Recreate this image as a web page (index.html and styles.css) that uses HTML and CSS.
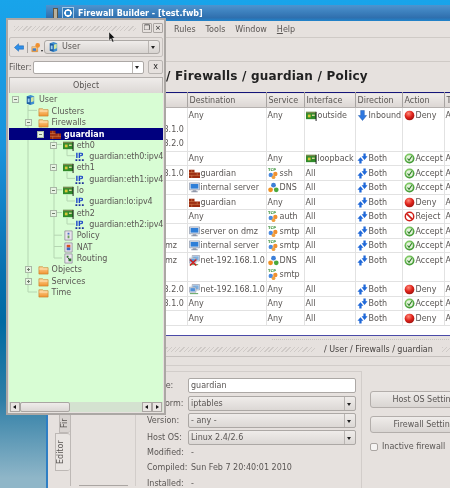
FILE: index.html
```html
<!DOCTYPE html>
<html lang="en">

    <head>
        <meta charset="UTF-8">
        <meta name="viewport" content="width=device-width, initial-scale=1.0">
        <title>Firewall Builder - [test.fwb]</title>
        <link rel="stylesheet" href="styles.css">
    </head>

    <body>

        <svg class="defs" aria-hidden="true">
            <defs>
                <radialGradient id="redball" cx="0.4" cy="0.3" r="0.8">
                    <stop offset="0" stop-color="#ff8a7a"/>
                    <stop offset="0.5" stop-color="#e0241c"/>
                    <stop offset="1" stop-color="#8e0f0c"/>
                </radialGradient>
                <radialGradient id="greenball" cx="0.4" cy="0.3" r="0.8">
                    <stop offset="0" stop-color="#9de07c"/>
                    <stop offset="1" stop-color="#2c8a22"/>
                </radialGradient>
                <linearGradient id="folderfill" x1="0" y1="0" x2="0" y2="1">
                    <stop offset="0" stop-color="#ffd79a"/>
                    <stop offset="1" stop-color="#f0922e"/>
                </linearGradient>
                <symbol id="i-folder" viewBox="0 0 12 12">
                    <path d="M1 3h4l1 1h5v7H1z" fill="url(#folderfill)" stroke="#c8822e" stroke-width="0.7"/>
                    <path d="M1.5 5.5h9" stroke="#fff0d0" stroke-width="0.8"/>
                </symbol>
                <symbol id="i-user" viewBox="0 0 12 12">
                    <path d="M2 2.5 6 1l4 1.5v8L6 12l-4-1.500z" fill="#3f8fd0"/>
                    <path d="M6 3.500v8L2 10.500v-8z" fill="#1d5ca0"/>
                    <path d="M6.500 4l3-1v5l-3 1z" fill="#d5e8a0"/>
                    <path d="M3 5h2v4H3z" fill="#9fd0ee"/>
                </symbol>
                <symbol id="i-fw" viewBox="0 0 12 12">
                    <path d="M0 2h6v3h6v6H0z" fill="#9c2c10"/>
                    <path d="M0 5h6M6 8h6M3 2v3M3 8v3M9 5v3M0 8h6" stroke="#d88a58" stroke-width="0.6"/>
                </symbol>
                <symbol id="i-nic" viewBox="0 0 12 12">
                    <path d="M0 2h11v8H0z" fill="#2f8a2a"/>
                    <path d="M0 2h11v1.500H0z" fill="#7a8a50"/>
                    <path d="M2 5h3v3H2z" fill="#d8c838"/>
                    <path d="M6.500 5h3v1.500h-3z" fill="#e0d8a0"/>
                    <path d="M11 2v10" stroke="#111" stroke-width="1"/>
                </symbol>
                <symbol id="i-ip" viewBox="0 0 12 12">
                    <text x="0.500" y="7.500" class="ip-glyph">IP</text>
                    <path d="M0.500 9h2v2h-2zM4 9h2v2H4zM7.500 9h2v2h-2z" fill="#1c2f9c"/>
                </symbol>
                <symbol id="i-policy" viewBox="0 0 12 12">
                    <path d="M2 1h8v10H2z" fill="#e8e4ec" stroke="#8c8498" stroke-width="0.8"/>
                    <path d="M5 3h2v2H5z" fill="#4a6ec0"/>
                    <path d="M5 6h2v3H5z" fill="#6aa05a"/>
                </symbol>
                <symbol id="i-nat" viewBox="0 0 12 12">
                    <path d="M2 1h8v10H2z" fill="#e8e4ec" stroke="#8c8498" stroke-width="0.8"/>
                    <path d="M4 3h4v3H4z" fill="#d85020"/>
                    <path d="M4 6h4v3H4z" fill="#3c68c0"/>
                </symbol>
                <symbol id="i-routing" viewBox="0 0 12 12">
                    <path d="M2 1h8v10H2z" fill="#e8e4ec" stroke="#8c8498" stroke-width="0.8"/>
                    <path d="M4 3h2v2H4z" fill="#2c7a2c"/>
                    <path d="M6 6h3v3H6z" fill="#2c7a2c"/>
                    <path d="M5 5l2 2" stroke="#222" stroke-width="0.8"/>
                </symbol>
                <symbol id="i-back" viewBox="0 0 12 12">
                    <path d="M0.500 6 5.500 1.500V4H11.500V8H5.500v2.500z" fill="#2f8fe8" stroke="#1560b0" stroke-width="0.6"/>
                </symbol>
                <symbol id="i-tree" viewBox="0 0 12 12">
                    <path d="M1 5h7v6H1z" fill="url(#folderfill)" stroke="#c8822e" stroke-width="0.6"/>
                    <circle cx="8" cy="3.500" r="2.800" fill="#f09030"/>
                    <path d="M2 7h4v3H2z" fill="#3f80d0"/>
                </symbol>
                <symbol id="i-host" viewBox="0 0 12 12">
                    <path d="M0.500 1h11v7.500H0.500z" fill="#dfe6f2" stroke="#7f8aa0" stroke-width="0.7"/>
                    <path d="M1.800 2.200h8.400v5H1.800z" fill="#2f7fd8"/>
                    <path d="M4 9h4v1H4zM2.500 10.200h7v1h-7z" fill="#8e96a8"/>
                </symbol>
                <symbol id="i-net" viewBox="0 0 12 12">
                    <path d="M3.500 0.500h8v6h-8z" fill="#dfe6f2" stroke="#7f8aa0" stroke-width="0.6"/>
                    <path d="M4.500 1.500h6v4h-6z" fill="#7fb0e0"/>
                    <path d="M0.500 3.500h7v5.500h-7z" fill="#dfe6f2" stroke="#7f8aa0" stroke-width="0.6"/>
                    <path d="M1.500 4.500h5v3.500h-5z" fill="#4f90d8"/>
                    <path d="M1 10.500h9" stroke="#4f9a4f" stroke-width="1"/>
                </symbol>
                <symbol id="i-netx" viewBox="0 0 12 12">
                    <use href="#i-net"/>
                    <path d="M1 5l7 6.500M8 5l-7 6.500" stroke="#d0201c" stroke-width="1.600"/>
                </symbol>
                <symbol id="i-tcp" viewBox="0 0 12 12">
                    <text x="0" y="3.800" class="tcp-glyph">TCP</text>
                    <circle cx="3" cy="7.500" r="2.400" fill="#4a8ae0"/>
                    <circle cx="8" cy="6.500" r="2.400" fill="#f09030"/>
                    <circle cx="6" cy="10" r="2" fill="#f0a040"/>
                </symbol>
                <symbol id="i-dns" viewBox="0 0 12 12">
                    <circle cx="6" cy="3.500" r="2.600" fill="#3d7fd8"/>
                    <circle cx="2.800" cy="8.500" r="2.600" fill="#f09020"/>
                    <circle cx="9" cy="8.500" r="2.600" fill="#4aa83c"/>
                </symbol>
                <symbol id="i-deny" viewBox="0 0 12 12">
                    <circle cx="6" cy="6" r="5.300" fill="url(#redball)"/>
                </symbol>
                <symbol id="i-accept" viewBox="0 0 12 12">
                    <circle cx="6" cy="6" r="5.400" fill="url(#greenball)"/>
                    <circle cx="6" cy="6" r="3.600" fill="#e4f2dc"/>
                    <path d="M3.800 6l1.700 2 3-4.500" fill="none" stroke="#2a7a22" stroke-width="1.200"/>
                </symbol>
                <symbol id="i-reject" viewBox="0 0 12 12">
                    <circle cx="6" cy="6" r="4.600" fill="#fff" stroke="#cf1f18" stroke-width="1.600"/>
                    <path d="M2.800 2.800l6.400 6.400" stroke="#cf1f18" stroke-width="1.800"/>
                </symbol>
                <symbol id="i-inbound" viewBox="0 0 12 12">
                    <path d="M4 0.500h4V6h2.500L6 11.500 1.500 6H4z" fill="#2f78e0" stroke="#1a55a8" stroke-width="0.5"/>
                </symbol>
                <symbol id="i-both" viewBox="0 0 12 12">
                    <path d="M7 0.500h2.500v3H11.500L8.200 7.500 5 3.500H7z" fill="#1f68d8"/>
                    <path d="M2.500 11.500H5v-3H7L3.800 4.500 0.500 8.500H2.500z" fill="#1f68d8"/>
                </symbol>
            </defs>
        </svg>

        <div class="desktop">

            <div class="main-window">
                <div class="titlebar">
                    <span class="tb-tower"></span>
                    <span class="tb-logo"></span>
                    <span class="tb-title">Firewall Builder - [test.fwb]</span>
                </div>
                <div class="menubar">
                    <span>Rules</span>
                    <span>Tools</span>
                    <span>Window</span>
                    <span><u>H</u>elp</span>
                </div>
                <div class="toolbar"></div>
                <div class="crumb">/ Firewalls / guardian / Policy</div>

                <table class="rules">
                    <colgroup>
                        <col class="c-num"><col class="c-src"><col class="c-dst"><col class="c-srv">
                        <col class="c-if"><col class="c-dir"><col class="c-act"><col class="c-time">
                    </colgroup>
                    <thead>
                        <tr><th></th><th></th><th>Destination</th><th>Service</th><th>Interface</th><th>Direction</th><th>Action</th><th>Time</th></tr>
                    </thead>
                    <tbody>
                        <tr class="r3">
                            <td></td>
                            <td class="src"><div>&nbsp;</div><div>net-192.168.1.0</div><div>net-192.168.2.0</div></td>
                            <td>Any</td>
                            <td>Any</td>
                            <td><svg class="ico"><use href="#i-nic"/></svg>outside</td>
                            <td><svg class="ico"><use href="#i-inbound"/></svg>Inbound</td>
                            <td><svg class="ico"><use href="#i-deny"/></svg>Deny</td>
                            <td>Any</td>
                        </tr>
                        <tr class="s">
                            <td></td><td class="src"></td>
                            <td>Any</td>
                            <td>Any</td>
                            <td><svg class="ico"><use href="#i-nic"/></svg>loopback</td>
                            <td><svg class="ico"><use href="#i-both"/></svg>Both</td>
                            <td><svg class="ico"><use href="#i-accept"/></svg>Accept</td>
                            <td>Any</td>
                        </tr>
                        <tr>
                            <td></td><td class="src">net-192.168.1.0</td>
                            <td><svg class="ico"><use href="#i-fw"/></svg>guardian</td>
                            <td><svg class="ico"><use href="#i-tcp"/></svg>ssh</td>
                            <td>All</td>
                            <td><svg class="ico"><use href="#i-both"/></svg>Both</td>
                            <td><svg class="ico"><use href="#i-accept"/></svg>Accept</td>
                            <td>Any</td>
                        </tr>
                        <tr class="s">
                            <td></td><td class="src"></td>
                            <td><svg class="ico"><use href="#i-host"/></svg>internal server</td>
                            <td><svg class="ico"><use href="#i-dns"/></svg>DNS</td>
                            <td>All</td>
                            <td><svg class="ico"><use href="#i-both"/></svg>Both</td>
                            <td><svg class="ico"><use href="#i-accept"/></svg>Accept</td>
                            <td>Any</td>
                        </tr>
                        <tr>
                            <td></td><td class="src"></td>
                            <td><svg class="ico"><use href="#i-fw"/></svg>guardian</td>
                            <td>Any</td>
                            <td>All</td>
                            <td><svg class="ico"><use href="#i-both"/></svg>Both</td>
                            <td><svg class="ico"><use href="#i-deny"/></svg>Deny</td>
                            <td>Any</td>
                        </tr>
                        <tr class="s">
                            <td></td><td class="src"></td>
                            <td>Any</td>
                            <td><svg class="ico"><use href="#i-tcp"/></svg>auth</td>
                            <td>All</td>
                            <td><svg class="ico"><use href="#i-both"/></svg>Both</td>
                            <td><svg class="ico"><use href="#i-reject"/></svg>Reject</td>
                            <td>Any</td>
                        </tr>
                        <tr>
                            <td></td><td class="src"></td>
                            <td><svg class="ico"><use href="#i-host"/></svg>server on dmz</td>
                            <td><svg class="ico"><use href="#i-tcp"/></svg>smtp</td>
                            <td>All</td>
                            <td><svg class="ico"><use href="#i-both"/></svg>Both</td>
                            <td><svg class="ico"><use href="#i-accept"/></svg>Accept</td>
                            <td>Any</td>
                        </tr>
                        <tr class="s">
                            <td></td><td class="src">server on dmz</td>
                            <td><svg class="ico"><use href="#i-host"/></svg>internal server</td>
                            <td><svg class="ico"><use href="#i-tcp"/></svg>smtp</td>
                            <td>All</td>
                            <td><svg class="ico"><use href="#i-both"/></svg>Both</td>
                            <td><svg class="ico"><use href="#i-accept"/></svg>Accept</td>
                            <td>Any</td>
                        </tr>
                        <tr class="r2">
                            <td></td><td class="src">server on dmz</td>
                            <td><svg class="ico"><use href="#i-netx"/></svg>net-192.168.1.0</td>
                            <td><div><svg class="ico"><use href="#i-dns"/></svg>DNS</div><div><svg class="ico"><use href="#i-tcp"/></svg>smtp</div></td>
                            <td>All</td>
                            <td><svg class="ico"><use href="#i-both"/></svg>Both</td>
                            <td><svg class="ico"><use href="#i-accept"/></svg>Accept</td>
                            <td>Any</td>
                        </tr>
                        <tr>
                            <td></td><td class="src">net-192.168.2.0</td>
                            <td><svg class="ico"><use href="#i-net"/></svg>net-192.168.1.0</td>
                            <td>Any</td>
                            <td>All</td>
                            <td><svg class="ico"><use href="#i-both"/></svg>Both</td>
                            <td><svg class="ico"><use href="#i-deny"/></svg>Deny</td>
                            <td>Any</td>
                        </tr>
                        <tr class="s">
                            <td></td><td class="src">net-192.168.1.0</td>
                            <td>Any</td>
                            <td>Any</td>
                            <td>All</td>
                            <td><svg class="ico"><use href="#i-both"/></svg>Both</td>
                            <td><svg class="ico"><use href="#i-accept"/></svg>Accept</td>
                            <td>Any</td>
                        </tr>
                        <tr>
                            <td></td><td class="src"></td>
                            <td>Any</td>
                            <td>Any</td>
                            <td>All</td>
                            <td><svg class="ico"><use href="#i-both"/></svg>Both</td>
                            <td><svg class="ico"><use href="#i-deny"/></svg>Deny</td>
                            <td>Any</td>
                        </tr>
                    </tbody>
                </table>
                <div class="table-rest"></div>

                <div class="splitter"></div>
                <div class="path-bar">
                    <span class="hatch"></span>
                    <span class="path-text">/ User / Firewalls / guardian</span>
                    <span class="hatch"></span>
                </div>
                <div class="spacer-bar"></div>

                <div class="editor">
                    <div class="tabs">
                        <div class="tab tab-fir">Fir</div>
                        <div class="tab tab-editor">Editor</div>
                    </div>
                    <div class="side-pane"><span class="side-btn"></span></div>
                    <div class="group">
                        <span class="lbl">Name:</span>
                        <div class="field field-text">guardian</div>
                        <span class="lbl">Platform:</span>
                        <div class="field combo">iptables<span class="combo-arrow"></span></div>
                        <span class="lbl">Version:</span>
                        <div class="field combo">- any -<span class="combo-arrow"></span></div>
                        <span class="lbl">Host OS:</span>
                        <div class="field combo">Linux 2.4/2.6<span class="combo-arrow"></span></div>
                        <span class="lbl">Modified:</span>
                        <span class="val">-</span>
                        <span class="lbl">Compiled:</span>
                        <span class="val">Sun Feb 7 20:40:01 2010</span>
                        <span class="lbl">Installed:</span>
                        <span class="val">-</span>
                    </div>
                    <div class="side-actions">
                        <div class="btn">Host OS Settings...</div>
                        <div class="btn">Firewall Settings...</div>
                        <label class="check"><span class="check-box"></span>Inactive firewall</label>
                    </div>
                </div>
            </div>

            <div class="panel">
                <div class="panel-title">
                    <span class="hatch"></span>
                    <span class="win-btn">&#10064;</span>
                    <span class="win-btn">&#215;</span>
                </div>
                <div class="panel-tools">
                    <svg class="tool-ico"><use href="#i-back"/></svg>
                    <span class="tool-sep"></span>
                    <svg class="tool-ico"><use href="#i-tree"/></svg>
                    <span class="tool-drop"></span>
                    <div class="lib-combo">
                        <svg class="ico"><use href="#i-user"/></svg>User
                        <span class="combo-arrow"></span>
                    </div>
                </div>
                <div class="filter-row">
                    <span class="filter-label">Filter:</span>
                    <div class="filter-input"><span class="combo-arrow"></span></div>
                    <div class="filter-x">x</div>
                </div>
                <div class="tree-head">Object</div>
                <div class="tree">
                    <svg class="tree-lines" width="154" height="309">
                        <path d="M19 12V199M19 17.350H28M19 199H28M32 28V40M45 45V165M45 51.400H53M45 96.800H53M45 119.500H53M45 142.200H53M45 153.500H53M45 165H53M58 56V62.700H66M58 79V85.400H66M58 102V108H66M58 125V131H66" fill="none" stroke="#b5d6b2" stroke-width="1"/>
                    </svg>
                    <div class="node lvl0"><span class="exp open"></span><svg class="ico"><use href="#i-user"/></svg>User</div>
                    <div class="node lvl1"><span class="exp none"></span><svg class="ico"><use href="#i-folder"/></svg>Clusters</div>
                    <div class="node lvl1"><span class="exp open"></span><svg class="ico"><use href="#i-folder"/></svg>Firewalls</div>
                    <div class="node lvl2 selected"><span class="exp open"></span><svg class="ico"><use href="#i-fw"/></svg>guardian</div>
                    <div class="node lvl3"><span class="exp open"></span><svg class="ico"><use href="#i-nic"/></svg>eth0</div>
                    <div class="node lvl4"><span class="exp none"></span><svg class="ico"><use href="#i-ip"/></svg>guardian:eth0:ipv4</div>
                    <div class="node lvl3"><span class="exp open"></span><svg class="ico"><use href="#i-nic"/></svg>eth1</div>
                    <div class="node lvl4"><span class="exp none"></span><svg class="ico"><use href="#i-ip"/></svg>guardian:eth1:ipv4</div>
                    <div class="node lvl3"><span class="exp open"></span><svg class="ico"><use href="#i-nic"/></svg>lo</div>
                    <div class="node lvl4"><span class="exp none"></span><svg class="ico"><use href="#i-ip"/></svg>guardian:lo:ipv4</div>
                    <div class="node lvl3"><span class="exp open"></span><svg class="ico"><use href="#i-nic"/></svg>eth2</div>
                    <div class="node lvl4"><span class="exp none"></span><svg class="ico"><use href="#i-ip"/></svg>guardian:eth2:ipv4</div>
                    <div class="node lvl3"><span class="exp none"></span><svg class="ico"><use href="#i-policy"/></svg>Policy</div>
                    <div class="node lvl3"><span class="exp none"></span><svg class="ico"><use href="#i-nat"/></svg>NAT</div>
                    <div class="node lvl3"><span class="exp none"></span><svg class="ico"><use href="#i-routing"/></svg>Routing</div>
                    <div class="node lvl1"><span class="exp closed"></span><svg class="ico"><use href="#i-folder"/></svg>Objects</div>
                    <div class="node lvl1"><span class="exp closed"></span><svg class="ico"><use href="#i-folder"/></svg>Services</div>
                    <div class="node lvl1"><span class="exp none"></span><svg class="ico"><use href="#i-folder"/></svg>Time</div>
                </div>
                <div class="hscroll">
                    <span class="sb-btn sb-left"></span>
                    <span class="sb-thumb"></span>
                    <span class="sb-track"></span>
                    <span class="sb-btn sb-left"></span>
                    <span class="sb-btn sb-right"></span>
                </div>
            </div>

            <svg class="cursor" width="8" height="11" viewBox="0 0 8 11">
                <path d="M1 0v8.500l2-2 1.300 3.500 1.500-.6L4.500 6H7z" fill="#111" stroke="#eee" stroke-width="0.4"/>
            </svg>

        </div>

    </body>

</html>
```

FILE: styles.css
```css
html,
body {
    margin: 0;
    padding: 0;
    overflow: hidden;
}

body {
    font-family: "DejaVu Sans", sans-serif;
    font-size: 8px;
    color: #5a5654;
    width: 450px;
    height: 488px;
}

.defs {
    display: block;
    width: 0;
    height: 0;
}

.ip-glyph {
    font-family: "DejaVu Sans", sans-serif;
    font-size: 8px;
    font-weight: bold;
    fill: #1c45c8;
}

.tcp-glyph {
    font-family: "DejaVu Sans", sans-serif;
    font-size: 4px;
    font-weight: bold;
    fill: #2c8a2c;
}

.desktop {
    position: relative;
    width: 450px;
    height: 488px;
    overflow: hidden;
    filter: blur(0.35px);
    background: linear-gradient(180deg, #18a4ea 0%, #1a93dc 30%, #0a70b0 55%, #006aa2 66%, #2f7ea6 82%, #8fb6c8 98%);
}

.cursor {
    position: absolute;
    left: 108px;
    top: 32px;
}

.ico {
    width: 11px;
    height: 11px;
    margin-right: 1px;
    vertical-align: -3px;
    flex: none;
}

/* main window */
.main-window {
    position: absolute;
    left: 46px;
    top: 5px;
    width: 520px;
    height: 490px;
    display: flex;
    flex-direction: column;
    background-color: #e6e1de;
    border-left: 2px solid #2f7fc4;
    box-sizing: border-box;
}

.titlebar {
    height: 16px;
    display: flex;
    align-items: center;
    flex: none;
    margin-left: -2px;
    background: linear-gradient(180deg, #4d94cf, #2f6fae 80%, #1f84cc);
    color: #fff;
    font-weight: bold;
}

.tb-tower {
    width: 5px;
    height: 11px;
    margin-left: 7px;
    background-color: #b8b09c;
    border: 1px solid #5a5648;
    box-sizing: border-box;
}

.tb-logo {
    width: 12px;
    height: 12px;
    margin-left: 4px;
    background: radial-gradient(circle, #2f7fc4 0 2px, #fff 2.5px 3.5px, #2a78ba 4px);
    border: 1px solid #a8cbe6;
    box-sizing: border-box;
}

.tb-title {
    margin-left: 4px;
    white-space: nowrap;
}

.menubar {
    height: 17px;
    flex: none;
    display: flex;
    align-items: center;
    padding-left: 126px;
    gap: 10px;
    border-bottom: 1px solid #cfcac6;
    box-sizing: border-box;
}

.toolbar {
    height: 24px;
    flex: none;
    border-bottom: 1px solid #cfcac6;
    box-sizing: border-box;
}

.crumb {
    height: 30px;
    flex: none;
    line-height: 29px;
    padding-left: 118px;
    font-size: 12px;
    font-weight: bold;
    color: #222;
    letter-spacing: 0.2px;
    white-space: nowrap;
    box-sizing: border-box;
}

/* rules table */
.rules {
    table-layout: fixed;
    width: 520px;
    border-collapse: collapse;
    background-color: #fff;
    border-top: 1px solid #14147a;
    flex: none;
}

.c-num { width: 39px; }
.c-src { width: 100px; }
.c-dst { width: 79px; }
.c-srv { width: 38px; }
.c-if { width: 51px; }
.c-dir { width: 47px; }
.c-act { width: 42px; }
.c-time { width: 124px; }

.rules th {
    height: 14px;
    padding: 0 0 0 2px;
    font-weight: normal;
    text-align: left;
    white-space: nowrap;
    overflow: hidden;
    background: linear-gradient(180deg, #f0edeb, #dbd6d3);
    border-right: 1px solid #a8a4a2;
    border-bottom: 1px solid #b5b1af;
}

.rules td {
    height: 13px;
    padding: 1px 0 0 1px;
    line-height: 13px;
    white-space: nowrap;
    overflow: hidden;
    vertical-align: top;
    border-right: 1px solid #e2e2e2;
    border-bottom: 1px solid #e2e2e2;
}

.rules td.src {
    padding-left: 32px;
}

.rules .s td {
    height: 12px;
    line-height: 12px;
}

.rules .r3 td {
    height: 42px;
    line-height: 14px;
}

.rules .r2 td {
    height: 27px;
    line-height: 13.5px;
}

.table-rest {
    height: 10px;
    flex: none;
    background-color: #fff;
    border-bottom: 1px solid #4a4aa8;
    box-sizing: border-box;
}

.splitter {
    height: 6px;
    flex: none;
    margin-left: 224px;
    background: repeating-linear-gradient(90deg, #c9c5c2 0 1px, transparent 1px 2px) center / 100% 1px no-repeat;
}

.path-bar {
    height: 15px;
    flex: none;
    display: flex;
    align-items: center;
    gap: 9px;
    border-bottom: 1px solid #c6c1be;
    box-sizing: border-box;
}

.path-bar .hatch:first-child {
    width: 267px;
    flex: none;
}

.path-text {
    white-space: nowrap;
    color: #45413f;
}

.hatch {
    flex: 1;
    height: 5px;
    background: repeating-linear-gradient(135deg, #cfcac7 0 1px, transparent 1px 3px);
}

.spacer-bar {
    height: 9px;
    flex: none;
    border-bottom: 1px solid #d2cdca;
    box-sizing: border-box;
}

.editor {
    flex: 1;
    display: flex;
    min-height: 0;
}

.tabs {
    width: 22px;
    flex: none;
    padding-top: 47px;
    display: flex;
    flex-direction: column;
    align-items: flex-end;
    box-sizing: border-box;
}

.tab {
    writing-mode: vertical-rl;
    transform: rotate(180deg);
    text-align: center;
    border: 1px solid #bdb8b5;
    border-left: none;
    box-sizing: border-box;
}

.tab-fir {
    width: 11px;
    height: 20px;
    overflow: hidden;
    background-color: #d8d3d0;
    border-radius: 3px 0 0 3px;
}

.tab-editor {
    width: 15px;
    height: 38px;
    background-color: #e9e5e2;
    border-radius: 3px 0 0 3px;
}

.side-pane {
    width: 64px;
    flex: none;
    display: flex;
    justify-content: center;
    align-items: flex-end;
    border-left: 1px solid #bdb8b5;
    border-right: 1px solid #d2cdca;
    box-sizing: content-box;
    height: 120px;
}

.side-btn {
    width: 49px;
    height: 1px;
    background-color: #aaa5a2;
}

.group {
    width: 226px;
    flex: none;
    height: 130px;
    margin-top: 5px;
    padding: 4px 5px 0 11px;
    box-sizing: border-box;
    display: grid;
    grid-template-columns: 41px 1fr;
    grid-template-rows: 19px 17px 17px 17px 13px 16px 16px;
    align-items: center;
    border-top: 1px solid #d2cdca;
    border-right: 1px solid #d2cdca;
}

.lbl,
.val {
    white-space: nowrap;
}

.val {
    padding-left: 3px;
    line-height: 13px;
}

.field {
    height: 15px;
    line-height: 13px;
    padding-left: 2px;
    border: 1px solid #aca8a5;
    border-radius: 2px;
    box-sizing: border-box;
    position: relative;
}

.field-text {
    background-color: #fff;
}

.combo {
    background: linear-gradient(180deg, #efecea, #dcd8d5);
}

.combo-arrow {
    position: absolute;
    right: 0;
    top: 0;
    bottom: 0;
    width: 10px;
    border-left: 1px solid #b9b5b2;
}

.combo-arrow::after {
    content: "";
    position: absolute;
    left: 2px;
    top: 50%;
    margin-top: -1px;
    border: 2px solid transparent;
    border-top: 3px solid #222;
}

.side-actions {
    margin-left: 8px;
    padding-top: 25px;
    display: flex;
    flex-direction: column;
    gap: 8px;
    width: 120px;
    flex: none;
}

.btn {
    height: 17px;
    line-height: 15px;
    text-align: center;
    border: 1px solid #b3aeab;
    border-radius: 3px;
    background: linear-gradient(180deg, #efecea, #d9d5d2);
    white-space: nowrap;
    box-sizing: border-box;
}

.check {
    display: flex;
    align-items: center;
    gap: 4px;
    margin-top: 1px;
}

.check-box {
    width: 6px;
    height: 6px;
    background-color: #f6f4f3;
    border: 1px solid #aaa5a2;
    border-radius: 2px;
}

/* floating object tree */
.panel {
    position: absolute;
    left: 6px;
    top: 18px;
    width: 160px;
    height: 397px;
    padding: 1px;
    display: flex;
    flex-direction: column;
    background-color: #e6e1de;
    border: 2px solid #aba7a4;
    box-sizing: border-box;
}

.panel-title {
    height: 14px;
    flex: none;
    display: flex;
    align-items: center;
    gap: 1px;
    padding: 0 0 0 5px;
}

.panel-title .hatch {
    margin-right: 5px;
}

.win-btn {
    width: 8px;
    height: 8px;
    line-height: 8px;
    font-size: 7px;
    text-align: center;
    color: #222;
    border: 1px solid #aaa5a2;
    border-radius: 1px;
}

.panel-tools {
    height: 20px;
    flex: none;
    margin: 2px 0 0;
    display: flex;
    align-items: center;
    padding: 0 2px 0 4px;
    border: 1px solid #c6c1be;
    border-radius: 2px;
    box-sizing: border-box;
}

.tool-ico {
    width: 10px;
    height: 11px;
    flex: none;
}

.tool-sep {
    width: 1px;
    height: 11px;
    margin: 0 3px;
    background-color: #a8a4a2;
}

.tool-drop {
    width: 0;
    height: 0;
    margin: 9px 1px 0 0;
    border: 1.5px solid transparent;
    border-top: 2px solid #222;
}

.lib-combo {
    flex: 1;
    height: 14px;
    line-height: 12px;
    padding-left: 3px;
    position: relative;
    border: 1px solid #aca8a5;
    border-radius: 3px;
    background: linear-gradient(180deg, #efecea, #d8d4d1);
    box-sizing: border-box;
}

.lib-combo .ico {
    margin-right: 3px;
}

.filter-row {
    height: 20px;
    flex: none;
    display: flex;
    align-items: center;
}

.filter-label {
    width: 24px;
    box-sizing: border-box;
}

.filter-input {
    width: 111px;
    height: 13px;
    position: relative;
    background-color: #fff;
    border: 1px solid #aca8a5;
    border-radius: 2px;
    box-sizing: border-box;
}

.filter-x {
    width: 15px;
    height: 14px;
    margin-left: 4px;
    line-height: 12px;
    text-align: center;
    color: #222;
    border: 1px solid #b9b5b2;
    border-radius: 2px;
    box-sizing: border-box;
}

.tree-head {
    height: 16px;
    flex: none;
    line-height: 15px;
    text-align: center;
    border: 1px solid #b3afac;
    border-bottom: none;
    background: linear-gradient(180deg, #efecea, #dcd8d5);
    box-sizing: border-box;
}

.tree {
    position: relative;
    height: 309px;
    flex: none;
    padding-top: 1px;
    background-color: #d8fdd4;
    box-sizing: border-box;
}

.tree-lines {
    position: absolute;
    left: 0;
    top: 0;
}

.node {
    position: relative;
    height: 11.35px;
    line-height: 11px;
    display: flex;
    align-items: center;
    white-space: nowrap;
    overflow: hidden;
}

.node .ico {
    margin-right: 3px;
}

.lvl0 { padding-left: 3px; }
.lvl1 { padding-left: 15.6px; }
.lvl2 { padding-left: 28px; }
.lvl3 { padding-left: 40.7px; }
.lvl4 { padding-left: 53.3px; letter-spacing: -0.12px; }

.selected {
    color: #fff;
    font-weight: bold;
    background-color: #00007e;
    height: 12px;
    margin-bottom: -0.65px;
}

.exp {
    width: 7px;
    height: 7px;
    margin-right: 6px;
    flex: none;
    box-sizing: border-box;
    border: 1px solid #a9b8a6;
    background-color: #e7f3e3;
}

.exp.none {
    visibility: hidden;
}

.exp.open {
    background-image: linear-gradient(#6f7d6c, #6f7d6c);
    background-size: 3px 1px;
    background-position: center;
    background-repeat: no-repeat;
}

.exp.closed {
    background-image: linear-gradient(#6f7d6c, #6f7d6c), linear-gradient(#6f7d6c, #6f7d6c);
    background-size: 3px 1px, 1px 3px;
    background-position: center;
    background-repeat: no-repeat;
}

.hscroll {
    height: 10px;
    flex: none;
    display: flex;
    padding: 0 1px;
    background-color: #d4e2d0;
    box-sizing: border-box;
}

.sb-btn {
    width: 10px;
    flex: none;
    position: relative;
    background-color: #e9e5e2;
    border: 1px solid #aaa5a2;
    box-sizing: border-box;
}

.sb-btn::after {
    content: "";
    position: absolute;
    top: 2px;
    border: 2px solid transparent;
}

.sb-left::after {
    left: 0;
    border-right: 3px solid #111;
}

.sb-right::after {
    left: 3px;
    border-left: 3px solid #111;
}

.sb-thumb {
    width: 50px;
    flex: none;
    background: radial-gradient(circle, #b5b1ae 0.6px, transparent 0.7px) center / 2px 2px no-repeat, linear-gradient(180deg, #efecea, #dcd8d5);
    background-size: 12px 6px, 100% 100%;
    border: 1px solid #aaa5a2;
    border-radius: 2px;
    box-sizing: border-box;
}

.sb-track {
    flex: 1;
}
```
